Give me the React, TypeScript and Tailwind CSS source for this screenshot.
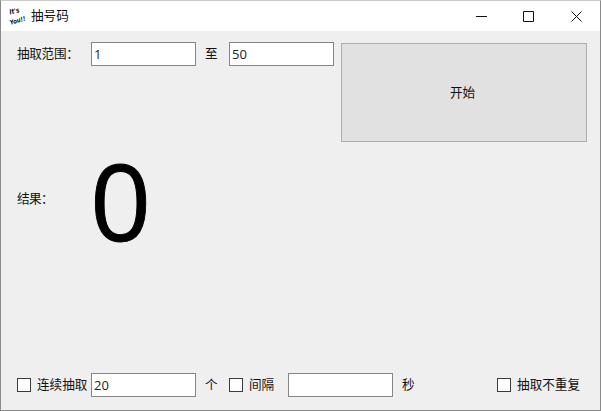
import type { ReactNode } from "react";

function Field({ value, className = "" }: { value: string; className?: string }) {
  return (
    <input
      defaultValue={value}
      className={`h-6 shrink-0 border border-[#858585] bg-white pl-[2px] pr-1 text-[13px] leading-none text-[#222] outline-none ${className}`}
    />
  );
}

function Check({ children, className = "" }: { children: ReactNode; className?: string }) {
  return (
    <label className={`flex shrink-0 items-center gap-[6px] whitespace-nowrap ${className}`}>
      <span className="size-[14px] shrink-0 border border-[#3c3c3c] bg-white" />
      <span>{children}</span>
    </label>
  );
}

function AppIcon() {
  return (
    <svg className="h-[22px] w-[19px] shrink-0" viewBox="0 0 19 22" fill="#111">
      <g fontFamily="'DejaVu Sans', sans-serif" fontWeight="700" fontStyle="italic">
        <text x="1" y="9.5" fontSize="7" textLength="10" lengthAdjust="spacingAndGlyphs" transform="rotate(-13 1 9.5)">It's</text>
        <text x="1.5" y="19.8" fontSize="6.4" textLength="16" lengthAdjust="spacingAndGlyphs" transform="rotate(-16 1.5 19.8)">You!!</text>
      </g>
    </svg>
  );
}

export default function App() {
  return (
    <div className="flex h-[411px] w-[601px] flex-col overflow-hidden border border-[#8a8a8a] border-t-[#cccccc] bg-[#efefef] font-['Open_Sans','Noto_Sans_CJK_SC',sans-serif] text-[12.6px] leading-4 text-[#111]">
      <header className="flex h-[30px] shrink-0 items-center bg-white pl-[8px]">
        <AppIcon />
        <h1 className="ml-[3px] flex-1">抽号码</h1>
        <div className="-mr-px flex">
          <svg className="h-[29px] w-12" viewBox="0 0 48 29" fill="none" stroke="#111">
            <path d="M19 14.5h11" />
          </svg>
          <svg className="h-[29px] w-12" viewBox="0 0 48 29" fill="none" stroke="#111">
            <path d="M18.5 9.5h10v10h-10z" />
          </svg>
          <svg className="h-[29px] w-12" viewBox="0 0 48 29" fill="none" stroke="#111">
            <path d="M18.5 9.5l10 10m0-10l-10 10" />
          </svg>
        </div>
      </header>

      <main className="flex flex-1 flex-col pl-4 pr-[13px]">
        <section className="flex h-[111px] shrink-0 items-start pt-[11px]">
          <div className="flex h-6 items-center">
            <span className="w-[74px] whitespace-nowrap tracking-[-0.3px]">抽取范围：</span>
            <Field value="1" className="w-[105px]" />
            <span className="w-[33px] pl-[9px]">至</span>
            <Field value="50" className="w-[105px]" />
          </div>
          <button className="ml-[7px] mt-px h-[99px] flex-1 border border-[#adadad] bg-[#e1e1e1] pr-[3px]">
            开始
          </button>
        </section>

        <section className="flex h-[114px] shrink-0 items-center">
          <span className="w-[73px] tracking-[-0.6px]">结果：</span>
          <span className="mt-[2px] text-[107px] leading-[112px] text-black [-webkit-text-stroke:0.9px_#000]">0</span>
        </section>

        <section className="mb-[13px] mt-auto flex h-6 items-center">
          <Check className="w-[74px]">连续抽取</Check>
          <Field value="20" className="w-[105px]" />
          <span className="w-[33px] pl-[9px]">个</span>
          <Check className="w-[59px]">间隔</Check>
          <Field value="" className="w-[105px]" />
          <span className="pl-[9px]">秒</span>
          <Check className="ml-auto mr-[7px]">抽取不重复</Check>
        </section>
      </main>
    </div>
  );
}
